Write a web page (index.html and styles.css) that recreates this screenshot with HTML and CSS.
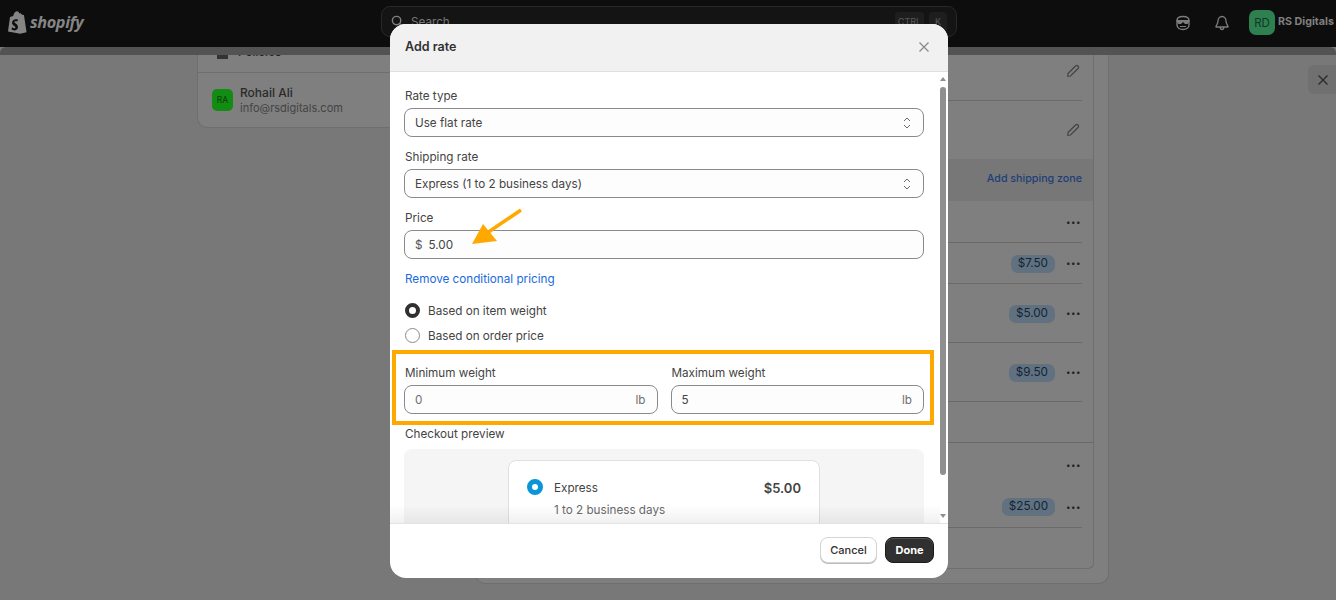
FILE: index.html
```html
<!DOCTYPE html>
<html lang="en">
<head>
    <meta charset="UTF-8">
    <title>Add rate</title>
    <link rel="stylesheet" href="styles.css">
</head>
<body>

<!-- Top bar -->
<div class="topbar">
    <div class="logo">
        <svg width="19" height="24" viewBox="0 0 20 24"><path fill="#858585" d="M13 2.600 11.900 3C11.400 1.500 10.600.8 9.600.8 7.800.8 6.100 3 5.500 5.600L2.900 6.400C2.200 6.600 2.100 6.700 2 7.400L0 22l12.800 2.300L19.500 22.900 16.800 4.600 14.800 4.300 13 2.600Z"/><path fill="#0d0d0d" d="M10.500 9.400 9.800 11.500C9.100 11.200 8.400 11.100 7.800 11.200 6.700 11.300 6.600 12 6.900 12.500 7.500 13.500 10.400 14.200 10.500 17.100 10.600 19.400 9.100 20.800 7.200 20.900 5.600 21 4.300 20.100 3.700 19.600L4.300 17.500C4.900 18 6 18.800 6.900 18.700 7.600 18.700 7.900 18.100 7.800 17.600 7.500 16.300 5.300 16.200 4.400 13.900 3.700 11.500 5.500 9.200 8 9 9.100 8.900 9.900 9.100 10.500 9.400Z"/></svg>
        <span class="logo-text">shopify</span>
    </div>
    <div class="searchbar">
        <svg width="13" height="13" viewBox="0 0 14 14"><circle cx="6" cy="6" r="4.500" fill="none" stroke="#808080" stroke-width="1.500"/><path d="m9.500 9.500 3 3" stroke="#808080" stroke-width="1.500"/></svg>
        <span class="search-text">Search</span>
        <span class="kbd">CTRL</span>
        <span class="kbd kbd-k">K</span>
    </div>
    <div class="top-right">
        <svg class="top-icon" width="16" height="16" viewBox="0 0 16 16"><path fill="none" stroke="#7c7c7c" stroke-width="1.400" d="M2 8V5.500C2 3 4.500 1.500 8 1.500S14 3 14 5.500V10c0 2.500-2.500 4.500-6 4.500S2 12.500 2 10Z"/><path fill="#7c7c7c" d="M1.500 5h13v1.500l-2 2.500h-2.500L8 7 6 9H3.500L1.500 6.500ZM5 11h6v1H5Z"/></svg>
        <svg class="top-icon bell" width="14" height="16" viewBox="0 0 14 16"><path fill="none" stroke="#7c7c7c" stroke-width="1.300" stroke-linejoin="round" d="M7 1.500C4.500 1.500 3 3.500 3 6c0 3-2 4.500-2 5.500v.5h12v-.5C13 10.500 11 9 11 6c0-2.500-1.500-4.500-4-4.500ZM5.300 12.500c0 1.200.7 2 1.700 2s1.700-.8 1.700-2"/></svg>
        <div class="store-avatar">RD</div>
        <span class="store-name">RS Digitals</span>
    </div>
</div>

<!-- Page behind the dialog -->
<div class="page">
    <div class="band"></div>
    <div class="columns">
        <div class="side-card">
            <div class="side-row policies">
                <span class="policy-icon"></span>
                <span>Policies</span>
            </div>
            <div class="side-row user">
                <div class="user-avatar">RA</div>
                <div>
                    <div class="user-name">Rohail Ali</div>
                    <div class="user-mail">info@rsdigitals.com</div>
                </div>
            </div>
        </div>

        <div class="main-card">
            <div class="inner-card">
                <div class="row row-first line">
                    <svg class="pencil" width="14" height="14" viewBox="0 0 14 14"><path fill="none" stroke="#444" stroke-width="1.200" d="M2 9.500 9.500 2a1.500 1.500 0 0 1 2.500 2.500L4.500 12 1.800 12.300Z"/></svg>
                </div>
                <div class="row row-second">
                    <svg class="pencil" width="14" height="14" viewBox="0 0 14 14"><path fill="none" stroke="#444" stroke-width="1.200" d="M2 9.500 9.500 2a1.500 1.500 0 0 1 2.500 2.500L4.500 12 1.800 12.300Z"/></svg>
                </div>
                <div class="zone-head">Add shipping zone</div>
                <div class="row h42 line"><span class="dots">•••</span></div>
                <div class="row h41 line"><span class="price-badge">$7.50</span><span class="dots">•••</span></div>
                <div class="row h59 line"><span class="price-badge">$5.00</span><span class="dots">•••</span></div>
                <div class="row h59 line"><span class="price-badge">$9.50</span><span class="dots">•••</span></div>
                <div class="row h40"></div>
                <div class="row h44 line section-top"><span class="dots">•••</span></div>
                <div class="row h42 line"><span class="price-badge">$25.00</span><span class="dots">•••</span></div>
            </div>
        </div>
    </div>
    <button class="page-close">
        <svg width="12" height="12" viewBox="0 0 12 12"><path d="m1.500 1.500 9 9m0-9-9 9" stroke="#2a2a2a" stroke-width="1.300"/></svg>
    </button>
</div>

<!-- Add rate dialog -->
<div class="modal">
    <div class="modal-header">
        <h2>Add rate</h2>
        <svg width="12" height="12" viewBox="0 0 12 12"><path d="m1.500 1.500 9 9m0-9-9 9" stroke="#8a8a8a" stroke-width="1.300"/></svg>
    </div>

    <div class="modal-body">
        <div class="field">
            <label>Rate type</label>
            <div class="input">
                <span>Use flat rate</span>
                <svg class="updown" width="10" height="14" viewBox="0 0 10 14"><path d="m2 5 3-3 3 3M2 9l3 3 3-3" fill="none" stroke="#6a6a6a" stroke-width="1"/></svg>
            </div>
        </div>
        <div class="field">
            <label>Shipping rate</label>
            <div class="input">
                <span>Express (1 to 2 business days)</span>
                <svg class="updown" width="10" height="14" viewBox="0 0 10 14"><path d="m2 5 3-3 3 3M2 9l3 3 3-3" fill="none" stroke="#6a6a6a" stroke-width="1"/></svg>
            </div>
        </div>
        <div class="field">
            <label>Price</label>
            <div class="input">
                <span class="prefix">$</span>
                <span class="value-grow">5.00</span>
            </div>
        </div>

        <a class="remove-link">Remove conditional pricing</a>

        <div class="radio-row first-radio"><span class="radio checked"></span>Based on item weight</div>
        <div class="radio-row"><span class="radio"></span>Based on order price</div>

        <div class="weights">
            <div class="weight">
                <label>Minimum weight</label>
                <div class="input">
                    <span class="value-grow muted">0</span>
                    <span class="unit">lb</span>
                </div>
            </div>
            <div class="weight">
                <label>Maximum weight</label>
                <div class="input">
                    <span class="value-grow">5</span>
                    <span class="unit">lb</span>
                </div>
            </div>
        </div>

        <label class="preview-label">Checkout preview</label>
        <div class="preview">
            <div class="preview-card">
                <span class="preview-radio"></span>
                <div class="preview-text">
                    <div class="preview-top">
                        <span>Express</span>
                        <strong>$5.00</strong>
                    </div>
                    <div class="preview-sub">1 to 2 business days</div>
                </div>
            </div>
        </div>

        <div class="scrollbar">
            <span class="arrow-up"></span>
            <span class="thumb"></span>
            <span class="arrow-down"></span>
        </div>
    </div>

    <div class="modal-footer">
        <button class="btn">Cancel</button>
        <button class="btn btn-dark">Done</button>
    </div>
</div>

<!-- Annotations drawn on the screenshot -->
<div class="highlight"></div>
<svg class="arrow" width="60" height="42" viewBox="0 0 60 42"><path d="M51 2 17 25" stroke="#ffa800" stroke-width="3.500"/><path d="M2 36 13 16 27 33Z" fill="#ffa800"/></svg>

</body>
</html>
```

FILE: styles.css
```css
* {
    box-sizing: border-box;
}

body {
    font-family: Inter, "Liberation Sans", sans-serif;
    font-size: 11.7px;
    background-color: #787878;
    color: #444;
    margin: 0;
    height: 600px;
    overflow: hidden;
    position: relative;
}

/* Top bar */
.topbar {
    height: 47px;
    background-color: #0d0d0d;
    position: relative;
}

.logo {
    position: absolute;
    left: 8px;
    top: 10px;
    display: flex;
    align-items: center;
    gap: 3px;
}

.logo-text {
    font-family: "Open Sans", sans-serif;
    font-size: 16.3px;
    font-weight: 700;
    font-style: italic;
    color: #858585;
    letter-spacing: -0.4px;
}

.searchbar {
    position: absolute;
    left: 381px;
    top: 6px;
    width: 576px;
    height: 31px;
    background-color: #141414;
    border: 1px solid #282828;
    border-radius: 9px;
    display: flex;
    align-items: center;
    padding: 0 9px 0 9px;
    gap: 5px;
    color: #777;
}

.search-text {
    flex: 1;
    margin-left: 2px;
}

.kbd {
    width: 29px;
    height: 20px;
    background-color: #1e1e1e;
    border-radius: 4px;
    font-size: 9px;
    text-align: center;
    line-height: 20px;
    color: #5a5a5a;
}

.kbd-k {
    width: 18px;
}

.top-right {
    position: absolute;
    left: 1175px;
    top: 10px;
    height: 25px;
    display: flex;
    align-items: center;
}

.bell {
    margin-left: 24px;
}

.store-avatar {
    width: 26px;
    height: 25px;
    margin-left: 20px;
    border-radius: 7px;
    background-color: #2e8050;
    color: #0e3a22;
    font-size: 11.500px;
    display: flex;
    align-items: center;
    justify-content: center;
}

.store-name {
    margin-left: 3px;
    margin-top: -3px;
    font-size: 10.700px;
    font-weight: 700;
    color: #808080;
    white-space: nowrap;
}

/* Page behind the dialog */
.page {
    height: 553px;
    overflow: hidden;
    position: relative;
}

.band {
    height: 8px;
    background-color: #535353;
    border-radius: 6px 6px 0 0;
}

.columns {
    display: flex;
    padding-left: 197px;
    align-items: flex-start;
}

.side-card {
    width: 250px;
    height: 73px;
    background-color: #7f7f7f;
    border: 1px solid #6e6e6e;
    border-top: none;
    border-radius: 0 0 10px 10px;
}

.side-row {
    display: flex;
    overflow: hidden;
}

.policies {
    height: 18px;
    align-items: flex-end;
    gap: 10px;
    padding: 0 0 13px 19px;
    border-bottom: 1px solid #6e6e6e;
    font-weight: 500;
    color: #222;
    line-height: 14px;
}

.policy-icon {
    width: 11px;
    height: 9px;
    background-color: #333;
    flex-shrink: 0;
}

.user {
    padding: 13px 14px;
    gap: 7px;
}

.user-avatar {
    width: 21px;
    height: 22px;
    margin-top: 3px;
    border-radius: 5px;
    background-color: #128c12;
    color: #0a3d0a;
    font-size: 8.500px;
    display: flex;
    align-items: center;
    justify-content: center;
}

.user-name {
    font-size: 12px;
    font-weight: 500;
    color: #2a2a2a;
    line-height: 14px;
}

.user-mail {
    font-size: 11px;
    color: #444;
    line-height: 16px;
}

.main-card {
    width: 634px;
    margin-left: 28px;
    height: 529px;
    background-color: #7f7f7f;
    border: 1px solid #6e6e6e;
    border-top: none;
    border-radius: 0 0 10px 10px;
    padding-right: 14px;
}

.inner-card {
    height: 514px;
    border: 1px solid #6e6e6e;
    border-top: none;
    border-left: none;
    border-radius: 0 0 6px 0;
}

.row {
    display: flex;
    align-items: center;
    justify-content: flex-end;
    gap: 11px;
    margin-right: 11px;
}

.line {
    border-bottom: 1px solid #6a6a6a;
}

.row-first {
    height: 46px;
    padding: 0 2px 14px 0;
}

.row-second {
    height: 58px;
    padding: 0 2px 0 0;
}

.zone-head {
    height: 42px;
    background-color: #777;
    color: #1d3f78;
    font-size: 10.700px;
    font-weight: 500;
    display: flex;
    align-items: center;
    justify-content: flex-end;
    padding: 0 11px 4px 0;
}

.h40 { height: 40px; }
.h41 { height: 41px; }
.h42 { height: 42px; }
.h44 { height: 44px; }
.h59 { height: 59px; }

.section-top {
    margin-right: 0;
    padding-right: 11px;
    border-top: 1px solid #6a6a6a;
    border-bottom: none;
    position: relative;
}

.dots {
    font-size: 8px;
    letter-spacing: 0.5px;
    color: #222;
    width: 16px;
}

.price-badge {
    background-color: #62717f;
    color: #10263a;
    font-size: 11.700px;
    height: 18px;
    line-height: 16px;
    padding: 0 7px;
    border-radius: 7px;
    margin-top: 1px;
}

.page-close {
    position: absolute;
    left: 1308px;
    top: 18px;
    width: 30px;
    height: 29px;
    background-color: #707070;
    border: none;
    border-radius: 6px 0 0 6px;
    padding: 0;
    display: flex;
    align-items: center;
    justify-content: center;
}

/* Add rate dialog */
.modal {
    position: absolute;
    left: 390px;
    top: 24px;
    width: 558px;
    height: 554px;
    background-color: white;
    border-radius: 16px;
    display: flex;
    flex-direction: column;
    overflow: hidden;
}

.modal-header {
    height: 48px;
    background-color: #f1f1f1;
    border-bottom: 1px solid #e0e0e0;
    display: flex;
    align-items: center;
    justify-content: space-between;
    padding: 0 18px 2px 15px;
    flex-shrink: 0;
}

.modal-header h2 {
    margin: 0;
    font-size: 12.500px;
    font-weight: 600;
    color: #303030;
}

.modal-body {
    flex: 1;
    overflow: hidden;
    position: relative;
    padding: 15px 24px 0 14px;
}

.field {
    margin-bottom: 11px;
}

label {
    display: block;
    height: 16px;
    line-height: 18px;
    margin-bottom: 5px;
    padding-left: 1px;
}

.input {
    height: 29px;
    display: flex;
    align-items: center;
    justify-content: space-between;
    padding: 0 11px 0 10px;
    background-color: #fdfdfd;
    border: 1px solid #8a8a8a;
    border-radius: 8px;
}

.prefix {
    margin-right: 6px;
    color: #555;
}

.value-grow {
    flex: 1;
}

.muted,
.unit {
    color: #6e6e6e;
}

.remove-link {
    display: block;
    line-height: 16px;
    padding: 1px 0 0 1px;
    color: #1a6ae0;
}

.radio-row {
    display: flex;
    align-items: center;
    gap: 8px;
    height: 25px;
    padding-left: 1px;
}

.first-radio {
    margin-top: 11px;
}

.radio {
    width: 15px;
    height: 15px;
    border: 1px solid #8a8a8a;
    border-radius: 50%;
    background-color: white;
}

.radio.checked {
    border: 4px solid #303030;
}

.weights {
    display: flex;
    gap: 13px;
    margin-top: 16px;
}

.weight {
    flex: 1;
}

.preview-label {
    margin-top: 11px;
    margin-bottom: 8px;
}

.preview {
    height: 200px;
    padding-top: 11px;
    background-color: #f5f5f5;
    border-radius: 8px;
    display: flex;
    justify-content: center;
}

.preview-card {
    width: 312px;
    height: 120px;
    background-color: white;
    border: 1px solid #e0e0e0;
    border-radius: 8px;
    padding: 18px 18px 0;
    display: flex;
    gap: 11px;
}

.preview-radio {
    width: 16px;
    height: 16px;
    flex-shrink: 0;
    border: 5px solid #0a95d8;
    border-radius: 50%;
    background-color: white;
}

.preview-text {
    flex: 1;
}

.preview-top {
    display: flex;
    justify-content: space-between;
    line-height: 18px;
}

.preview-top strong {
    font-size: 13px;
    font-weight: 600;
}

.preview-sub {
    margin-top: 5px;
    line-height: 16px;
    color: #6a6a6a;
}

/* Fade over the bottom of the scrolling part */
.modal-body::after {
    content: "";
    position: absolute;
    left: 0;
    right: 8px;
    bottom: 0;
    height: 18px;
    background: linear-gradient(rgba(0, 0, 0, 0), rgba(0, 0, 0, 0.06));
}

.scrollbar {
    position: absolute;
    top: 0;
    right: 0;
    bottom: 0;
    width: 10px;
    background-color: white;
    display: flex;
    flex-direction: column;
    align-items: center;
    padding-top: 5px;
}

.arrow-up,
.arrow-down {
    width: 0;
    height: 0;
    border-left: 3px solid transparent;
    border-right: 3px solid transparent;
}

.arrow-up {
    border-bottom: 4px solid #8f8f8f;
}

.arrow-down {
    border-top: 4px solid #8f8f8f;
    margin-top: 39px;
}

.thumb {
    width: 6px;
    height: 388px;
    margin-top: 6px;
    background-color: #8f8f8f;
    border-radius: 3px;
}

.modal-footer {
    height: 55px;
    flex-shrink: 0;
    border-top: 1px solid #e3e3e3;
    display: flex;
    justify-content: flex-end;
    align-items: center;
    gap: 8px;
    padding: 0 14px 2px 0;
}

.btn {
    height: 26px;
    width: 57px;
    font-family: inherit;
    font-size: 11px;
    font-weight: 500;
    color: #303030;
    background-color: white;
    border: 1px solid #d4d4d4;
    border-radius: 8px;
    padding: 0;
    box-shadow: 0 1px 0 #bdbdbd;
}

.btn-dark {
    width: 49px;
    font-weight: 700;
    color: white;
    background-color: #303030;
    border-color: #1a1a1a;
    box-shadow: inset 0 1px 0 #555;
}

/* Annotations */
.highlight {
    position: absolute;
    left: 392px;
    top: 350px;
    width: 542px;
    height: 75px;
    border: 4px solid #ffa800;
}

.arrow {
    position: absolute;
    left: 470px;
    top: 208px;
}
```
